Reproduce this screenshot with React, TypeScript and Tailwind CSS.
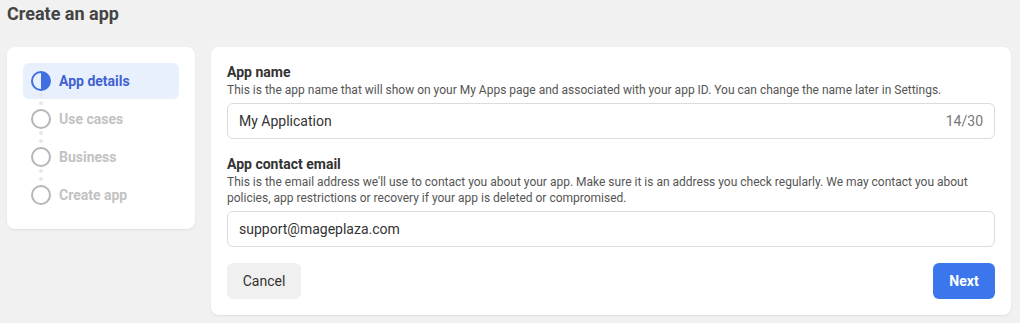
import React from "react";

type Step = { label: string; active?: boolean };

const steps: Step[] = [
  { label: "App details", active: true },
  { label: "Use cases" },
  { label: "Business" },
  { label: "Create app" },
];

const StepIcon = ({ active }: { active?: boolean }) =>
  active ? (
    <svg width="20" height="20" viewBox="0 0 20 20">
      <circle cx="10" cy="10" r="9" fill="none" stroke="#3f6fe0" strokeWidth="2" />
      <path d="M10 1 A9 9 0 0 1 10 19 Z" fill="#3f6fe0" />
    </svg>
  ) : (
    <svg width="20" height="20" viewBox="0 0 20 20">
      <circle cx="10" cy="10" r="9" fill="none" stroke="#b4b6ba" strokeWidth="2" />
    </svg>
  );

const Field = ({
  label,
  help,
  value,
  counter,
}: {
  label: string;
  help: string;
  value: string;
  counter?: string;
}) => (
  <div className="flex flex-col">
    <div className="text-[14px] leading-[20px] font-bold text-[#333]">{label}</div>
    <div className="text-[12px] leading-[16px] text-[#555]">{help}</div>
    <div className="mt-[5px] h-[36px] flex items-center justify-between rounded-[6px] border border-[#dcdcdc] px-[11px] text-[14px]">
      <span className="text-[#333]">{value}</span>
      {counter && <span className="text-[#777]">{counter}</span>}
    </div>
  </div>
);

export default function App() {
  return (
    <div
      className="w-[1020px] h-[323px] bg-[#f1f1f1] px-[7px] overflow-hidden"
      style={{ fontFamily: "Roboto, 'Noto Sans', sans-serif" }}
    >
      <h1 className="h-[28px] leading-[28px] text-[18px] font-bold text-[#444]">Create an app</h1>
      <div className="mt-[19px] flex items-start gap-[16px]">
        <div className="w-[188px] rounded-[8px] bg-white shadow-[0_1px_2px_rgba(0,0,0,0.08)] p-[16px] flex flex-col gap-[2px]">
          {steps.map((s, i) => (
            <div
              key={s.label}
              className={`relative h-[36px] flex items-center gap-[8px] pl-[8px] rounded-[6px] ${
                s.active ? "bg-[#e9f0fd]" : ""
              }`}
            >
              <StepIcon active={s.active} />
              <span
                className={`text-[14px] font-bold ${s.active ? "text-[#3f62d0]" : "text-[#c2c2c2]"}`}
              >
                {s.label}
              </span>
              {i < steps.length - 1 && (
                <div className="absolute left-[16px] top-[30px] flex flex-col gap-[4px]">
                  <span className="block w-[4px] h-[4px] rounded-full bg-[#e6e7e9]" />
                  <span className="block w-[4px] h-[4px] rounded-full bg-[#e6e7e9]" />
                </div>
              )}
            </div>
          ))}
        </div>
        <div className="flex-1 mr-[2px] rounded-[8px] bg-white shadow-[0_1px_2px_rgba(0,0,0,0.08)] px-[16px] pt-[15px] pb-[16px] flex flex-col">
          <Field
            label="App name"
            help="This is the app name that will show on your My Apps page and associated with your app ID. You can change the name later in Settings."
            value="My Application"
            counter="14/30"
          />
          <div className="mt-[15px]">
            <Field
              label="App contact email"
              help="This is the email address we'll use to contact you about your app. Make sure it is an address you check regularly. We may contact you about policies, app restrictions or recovery if your app is deleted or compromised."
              value="support@mageplaza.com"
            />
          </div>
          <div className="mt-[16px] flex justify-between">
            <button className="h-[36px] w-[74px] rounded-[6px] bg-[#f0f0f0] text-[14px] text-[#333]">
              Cancel
            </button>
            <button className="h-[36px] w-[62px] rounded-[6px] bg-[#3b76ec] text-[14px] font-bold text-white">
              Next
            </button>
          </div>
        </div>
      </div>
    </div>
  );
}
